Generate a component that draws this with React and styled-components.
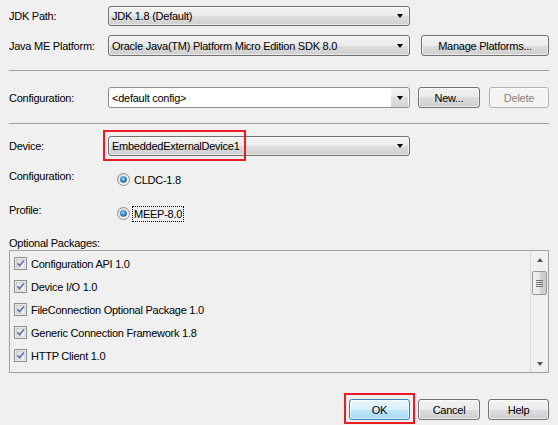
import React from "react";
import styled, { createGlobalStyle } from "styled-components";

const Global = createGlobalStyle`
  body {
    margin: 0;
    background: #f0f0f0;
  }
`;

const Dialog = styled.div`
  width: 558px;
  height: 425px;
  box-sizing: border-box;
  padding: 0 9px;
  background: #f0f0f0;
  display: flex;
  flex-direction: column;
  font-family: "Liberation Sans", Arial, sans-serif;
  font-size: 11px;
  letter-spacing: -0.25px;
  color: #000;
`;

const FieldRow = styled.div`
  display: flex;
  align-items: center;
  height: ${(p) => p.$h || 20}px;
  margin-top: ${(p) => p.$mt || 0}px;
  flex: none;
`;

const Label = styled.div`
  width: 99px;
  flex: none;
  line-height: 14px;
`;

const ComboWrap = styled.div`
  position: relative;
  width: 302px;
  height: 100%;
  flex: none;
`;

const Combo = styled.div`
  height: 100%;
  box-sizing: border-box;
  border: 1px solid ${(p) => (p.$editable ? "#8c8f96" : "#707070")};
  border-radius: 3px;
  background: ${(p) =>
    p.$editable
      ? "#fff"
      : "linear-gradient(#f2f2f2 0%, #ebebeb 50%, #dddddd 50%, #cfcfcf 100%)"};
  box-shadow: inset 0 0 0 1px rgba(255, 255, 255, 0.55);
  display: flex;
  align-items: center;
  padding-left: 3px;
  overflow: hidden;
`;

const ComboText = styled.div`
  flex: 1;
  white-space: nowrap;
`;

const ComboArrow = styled.div`
  width: 17px;
  height: 100%;
  flex: none;
  display: flex;
  align-items: center;
  justify-content: center;
  background: ${(p) =>
    p.$editable
      ? "linear-gradient(#f4f4f4 0%, #ececec 50%, #e0e0e0 50%, #d6d6d6 100%)"
      : "transparent"};
  margin-right: 1px;
`;

const Triangle = styled.div`
  width: 0;
  height: 0;
  border-left: 3.5px solid transparent;
  border-right: 3.5px solid transparent;
  border-${(p) => (p.$up ? "bottom" : "top")}: 4px solid ${(p) => p.$color || "#000"};
`;

const Button = styled.button`
  width: ${(p) => p.$w}px;
  height: 21px;
  margin-left: ${(p) => p.$ml || 0}px;
  box-sizing: border-box;
  padding: 0;
  flex: none;
  font-family: inherit;
  font-size: 11px;
  letter-spacing: inherit;
  color: ${(p) => (p.$disabled ? "#838383" : "#000")};
  border: 1px solid
    ${(p) => (p.$default ? "#3c7fb1" : p.$disabled ? "#adb2b5" : "#707070")};
  border-radius: 3px;
  background: ${(p) =>
    p.$default
      ? "linear-gradient(#eaf6fd 0%, #d9f0fc 50%, #bee6fd 50%, #a7d9f5 100%)"
      : p.$disabled
      ? "#f4f4f4"
      : "linear-gradient(#f2f2f2 0%, #ebebeb 50%, #dddddd 50%, #cfcfcf 100%)"};
  box-shadow: inset 0 0 0 1px rgba(255, 255, 255, 0.6);
`;

const Separator = styled.div`
  height: 1px;
  background: #a0a0a0;
  margin-top: ${(p) => p.$mt}px;
  flex: none;
`;

const Highlight = styled.div`
  position: absolute;
  left: -5px;
  top: -6px;
  width: ${(p) => p.$w}px;
  height: 31px;
  box-sizing: border-box;
  border: 2px solid #ec1c24;
  pointer-events: none;
`;

const RadioRow = styled.div`
  display: flex;
  align-items: flex-start;
  margin-top: ${(p) => p.$mt}px;
  flex: none;
`;

const RadioOption = styled.div`
  display: flex;
  align-items: center;
  margin-top: 4px;
  margin-left: 9px;
  gap: 4px;
  height: 13px;
`;

const RadioText = styled.span`
  line-height: 14px;
  padding: 0 1px;
  border: 1px ${(p) => (p.$focus ? "dotted #000" : "solid transparent")};
  margin-left: -2px;
`;

const SectionLabel = styled.div`
  margin-top: 17px;
  line-height: 13px;
  flex: none;
`;

const ListBox = styled.div`
  height: 123px;
  box-sizing: border-box;
  border: 1px solid #a0a0a0;
  display: flex;
  flex: none;
`;

const ListItems = styled.div`
  flex: 1;
  padding-top: 1px;
  padding-left: 4px;
`;

const ListItem = styled.div`
  display: flex;
  align-items: center;
  height: 23px;
  gap: 4px;
`;

const ScrollBar = styled.div`
  width: 17px;
  border-left: 1px solid #dcdcdc;
  background: #f0f0f0;
  display: flex;
  flex-direction: column;
  align-items: center;
`;

const ScrollArrow = styled.div`
  height: 17px;
  width: 100%;
  display: flex;
  align-items: center;
  justify-content: center;
  flex: none;
`;

const ScrollTrack = styled.div`
  flex: 1;
  width: 100%;
  display: flex;
  flex-direction: column;
  align-items: center;
`;

const Thumb = styled.div`
  margin-top: ${(p) => p.$offset}px;
  width: 15px;
  height: 24px;
  box-sizing: border-box;
  border: 1px solid #979797;
  border-radius: 2px;
  background: linear-gradient(to right, #f3f3f3 0%, #e8e8e8 50%, #d6d6d6 51%, #cacaca 100%);
  display: flex;
  flex-direction: column;
  align-items: center;
  justify-content: center;
  gap: 1px;
`;

const Grip = styled.div`
  width: 7px;
  height: 1px;
  background: #6f6f6f;
`;

const Footer = styled.div`
  display: flex;
  justify-content: flex-end;
  margin-top: 26px;
  flex: none;
`;

const OkWrap = styled.div`
  position: relative;
  margin-right: 1px;
`;

const RadioIcon = () => (
  <svg width="13" height="13" viewBox="0 0 13 13">
    <defs>
      <linearGradient id="rOuter" x1="0" y1="0" x2="1" y2="1">
        <stop offset="0" stopColor="#d6d6d6" />
        <stop offset="1" stopColor="#ffffff" />
      </linearGradient>
      <radialGradient id="rDot" cx="0.45" cy="0.4" r="0.6">
        <stop offset="0" stopColor="#a6e0ff" />
        <stop offset="0.55" stopColor="#3b8ed4" />
        <stop offset="1" stopColor="#174b84" />
      </radialGradient>
    </defs>
    <circle cx="6.5" cy="6.5" r="6" fill="url(#rOuter)" stroke="#8f8f8f" />
    <circle cx="6.5" cy="6.5" r="3.3" fill="url(#rDot)" />
  </svg>
);

const CheckIcon = () => (
  <svg width="13" height="13" viewBox="0 0 13 13">
    <defs>
      <linearGradient id="cBox" x1="0" y1="0" x2="1" y2="1">
        <stop offset="0" stopColor="#d8d8d8" />
        <stop offset="1" stopColor="#fbfbfb" />
      </linearGradient>
    </defs>
    <rect x="0.5" y="0.5" width="12" height="12" fill="#fff" stroke="#8f8f8f" />
    <rect x="2" y="2" width="9" height="9" fill="url(#cBox)" stroke="#b0b0b0" strokeWidth="0.6" />
    <path d="M3.4 6.3 L5.6 8.8 L9.8 3.4" fill="none" stroke="#5a70ad" strokeWidth="1.6" />
  </svg>
);

const packages = [
  "Configuration API 1.0",
  "Device I/O 1.0",
  "FileConnection Optional Package 1.0",
  "Generic Connection Framework 1.8",
  "HTTP Client 1.0",
];

const ComboBox = ({ text, editable, children }) => (
  <ComboWrap>
    <Combo $editable={editable}>
      <ComboText>{text}</ComboText>
      <ComboArrow $editable={editable}>
        <Triangle />
      </ComboArrow>
    </Combo>
    {children}
  </ComboWrap>
);

export default function App() {
  return (
    <>
      <Global />
      <Dialog>
        <FieldRow $mt={6} $h={20}>
          <Label>JDK Path:</Label>
          <ComboBox text="JDK 1.8 (Default)" />
        </FieldRow>
        <FieldRow $mt={9} $h={21}>
          <Label>Java ME Platform:</Label>
          <ComboBox text="Oracle Java(TM) Platform Micro Edition SDK 8.0" />
          <Button $w={128} $ml={11}>Manage Platforms...</Button>
        </FieldRow>
        <Separator $mt={14} />
        <FieldRow $mt={16} $h={21}>
          <Label>Configuration:</Label>
          <ComboBox text="<default config>" editable />
          <Button $w={62} $ml={8}>New...</Button>
          <Button $w={60} $ml={9} $disabled>Delete</Button>
        </FieldRow>
        <Separator $mt={15} />
        <FieldRow $mt={12} $h={20}>
          <Label>Device:</Label>
          <ComboBox text="EmbeddedExternalDevice1">
            <Highlight $w={143} />
          </ComboBox>
        </FieldRow>
        <RadioRow $mt={13}>
          <Label>Configuration:</Label>
          <RadioOption>
            <RadioIcon />
            <RadioText>CLDC-1.8</RadioText>
          </RadioOption>
        </RadioRow>
        <RadioRow $mt={17}>
          <Label>Profile:</Label>
          <RadioOption>
            <RadioIcon />
            <RadioText $focus>MEEP-8.0</RadioText>
          </RadioOption>
        </RadioRow>
        <SectionLabel>Optional Packages:</SectionLabel>
        <ListBox>
          <ListItems>
            {packages.map((p) => (
              <ListItem key={p}>
                <CheckIcon />
                <span>{p}</span>
              </ListItem>
            ))}
          </ListItems>
          <ScrollBar>
            <ScrollArrow>
              <Triangle $up $color="#555" />
            </ScrollArrow>
            <ScrollTrack>
              <Thumb $offset={3}>
                <Grip />
                <Grip />
                <Grip />
                <Grip />
              </Thumb>
            </ScrollTrack>
            <ScrollArrow>
              <Triangle $color="#555" />
            </ScrollArrow>
          </ScrollBar>
        </ListBox>
        <Footer>
          <OkWrap>
            <Button $w={61} $default>OK</Button>
            <Highlight $w={71} />
          </OkWrap>
          <Button $w={62} $ml={7}>Cancel</Button>
          <Button $w={61} $ml={8}>Help</Button>
        </Footer>
      </Dialog>
    </>
  );
}
